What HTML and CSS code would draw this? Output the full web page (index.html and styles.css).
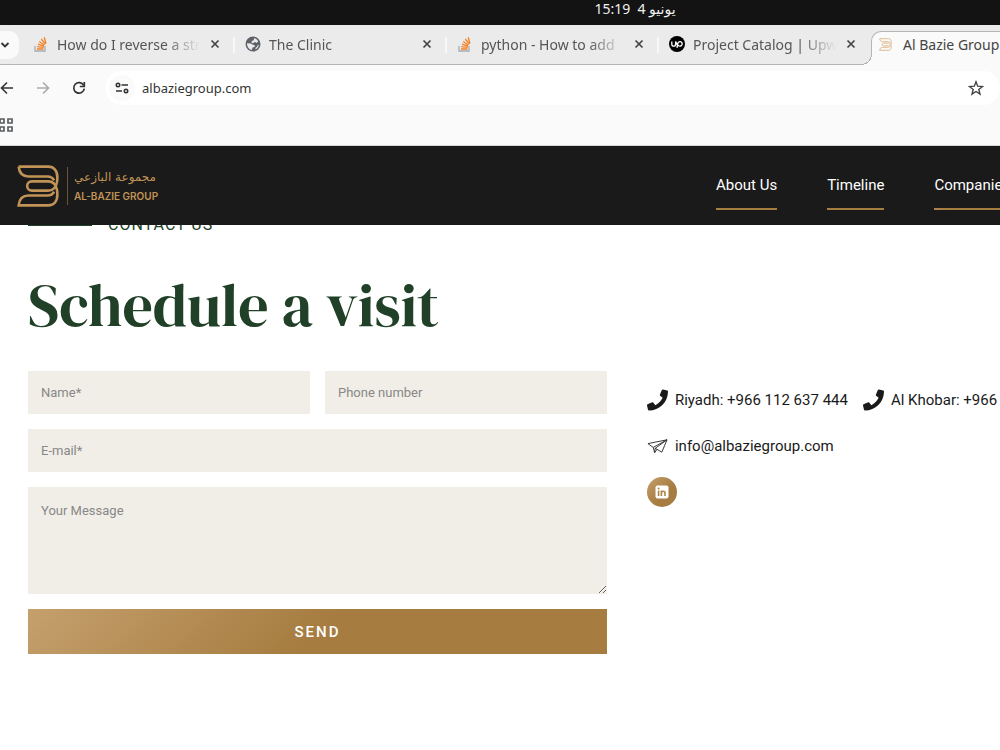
FILE: index.html
```
<!DOCTYPE html>
<html lang="en">
<head>
    <meta charset="UTF-8">
    <meta name="viewport" content="width=device-width, initial-scale=1.0">
    <title>Al Bazie Group</title>
    <link rel="stylesheet" href="styles.css">
</head>
<body>
    <svg class="defs" aria-hidden="true">
        <symbol id="close" viewBox="0 0 10 10">
            <path d="M1.500 1.500l7 7M8.500 1.500l-7 7" fill="none" stroke="#444" stroke-width="1.700"/>
        </symbol>
        <symbol id="stack" viewBox="0 0 16 16">
            <path d="M2 10v5h10v-5" fill="none" stroke="#a5adb5" stroke-width="1.300"/>
            <path d="M4 13h6.500M4.200 10.700l6.400.7M4.900 8.200l6 2M6.200 5.500l5.300 3.700M8.300 3l4 5.200M11.200 1.200l1.800 6.300" fill="none" stroke="#f48024" stroke-width="1.300"/>
        </symbol>
        <symbol id="phone" viewBox="0 0 512 512">
            <path fill="#1a1a1a" d="M493.400 24.600l-104-24c-11.300-2.600-22.900 3.300-27.500 13.900l-48 112c-4.200 9.800-1.400 21.300 6.900 28l60.600 49.600c-36 76.700-98.900 140.500-177.200 177.200l-49.600-60.600c-6.800-8.300-18.200-11.100-28-6.900l-112 48C3.900 366.500-2 378.100.6 389.400l24 104C27.100 504.200 36.700 512 48 512c256.100 0 464-207.500 464-464 0-11.200-7.700-20.900-18.600-23.400z"/>
        </symbol>
        <symbol id="brand" viewBox="15 10 128 132">
            <g fill="none" stroke="currentColor" stroke-width="8">
                <path d="M20 17H110C128 17 138 30 138 50C138 75 128 90 110 90H60a14 14 0 0 1 0-28H110C128 62 138 77 138 102C138 122 128 135 110 135H20C22 115 32 105 50 105H108c10 0 17-6 20-12"/>
                <path d="M20 17C22 37 32 47 50 47H108c10 0 17 6 20 12"/>
            </g>
        </symbol>
    </svg>

    <div class="system-bar" dir="rtl">
        <span>يونيو 4&nbsp; 15:19</span>
    </div>

    <div class="tab-strip">
        <button class="tab-search" aria-label="Search tabs">
            <svg width="10" height="10" viewBox="0 0 10 10"><path d="M1.500 3l3.500 3.500L8.500 3" fill="none" stroke="#333" stroke-width="1.800"/></svg>
        </button>
        <div class="tab">
            <svg class="favicon"><use href="#stack"/></svg>
            <span class="tab-title">How do I reverse a str</span>
            <button class="tab-close" aria-label="Close tab"><svg><use href="#close"/></svg></button>
        </div>
        <div class="tab">
            <svg class="favicon" viewBox="0 0 16 16">
                <circle cx="8" cy="8" r="7.500" fill="#5f6368"/>
                <path d="M9 2.200c1.800.3 3.300 1.400 4.200 3L11.500 7 9.800 5.800 8.300 7.200l-1.800-.6.3-1.600 2-.8zM2 7.200l4 .3 1.800 1.300 1.800.4.2 1.600-2.200.8-.8 2.300C4 13.300 2 10.600 2 7.200zM13.900 9c-.4 2-1.700 3.700-3.500 4.500l.2-1.800 1.600-.9.400-1.500z" fill="#ebebeb"/>
            </svg>
            <span class="tab-title">The Clinic</span>
            <button class="tab-close" aria-label="Close tab"><svg><use href="#close"/></svg></button>
        </div>
        <div class="tab">
            <svg class="favicon"><use href="#stack"/></svg>
            <span class="tab-title">python - How to add</span>
            <button class="tab-close" aria-label="Close tab"><svg><use href="#close"/></svg></button>
        </div>
        <div class="tab tab-last">
            <svg class="favicon" viewBox="0 0 16 16">
                <circle cx="8" cy="8" r="8" fill="#000"/>
                <path d="M2.800 5.500v2.800a1.900 1.900 0 0 0 3.800 0V5.500c.6 2 1.700 3.800 3.300 4.400 1.900.5 3.300-.6 3.300-2.100 0-1.400-1-2.200-2.200-2.200-1.500 0-2.200 1.200-2.500 3l-.5 3.200" fill="none" stroke="#fff" stroke-width="1.300"/>
            </svg>
            <span class="tab-title">Project Catalog | Upw</span>
            <button class="tab-close" aria-label="Close tab"><svg><use href="#close"/></svg></button>
        </div>
        <div class="tab tab-active">
            <svg class="favicon brand-icon"><use href="#brand"/></svg>
            <span>Al Bazie Group</span>
        </div>
    </div>

    <div class="toolbar">
        <div class="nav-buttons">
            <button aria-label="Back"><svg viewBox="0 0 14 14"><path d="M13 7H2M7 1.500L1.500 7 7 12.500" fill="none" stroke="#333" stroke-width="1.600"/></svg></button>
            <button aria-label="Forward"><svg viewBox="0 0 14 14"><path d="M1 7h11M7 1.500L12.500 7 7 12.500" fill="none" stroke="#aaa" stroke-width="1.600"/></svg></button>
            <button aria-label="Reload"><svg viewBox="0 0 14 14"><path d="M11.700 4.300A5.300 5.300 0 1 0 12.300 7.700" fill="none" stroke="#333" stroke-width="1.700"/><path d="M12.300 1v4.500H7.800" fill="none" stroke="#333" stroke-width="1.700"/></svg></button>
        </div>
        <div class="address">
            <button class="site-info" aria-label="Site information">
                <svg width="14" height="14" viewBox="0 0 14 14" fill="none" stroke="#333" stroke-width="1.600"><circle cx="3" cy="4" r="1.700"/><path d="M6.500 4H13M1 10h6"/><circle cx="11" cy="10" r="1.700"/></svg>
            </button>
            <input type="text" class="url" value="albaziegroup.com" aria-label="Address">
            <button class="star" aria-label="Bookmark this page">
                <svg width="16" height="16" viewBox="0 0 16 16"><path d="M8 1.800l1.700 4.400 4.800.3-3.700 3 1.200 4.600L8 11.500l-4 2.600 1.200-4.600-3.700-3 4.800-.3z" fill="none" stroke="#444" stroke-width="1.400"/></svg>
            </button>
        </div>
    </div>

    <div class="bookmarks">
        <button aria-label="Apps">
            <svg width="14" height="14" viewBox="0 0 14 14" fill="none" stroke="#5a5d61" stroke-width="1.700"><path d="M1 1h4v4H1zM9 1h4v4H9zM1 9h4v4H1zM9 9h4v4H9z"/></svg>
        </button>
    </div>

    <header class="site-header">
        <a href="#" class="logo">
            <svg class="logo-mark"><use href="#brand"/></svg>
            <span class="logo-text">
                <span class="logo-ar" lang="ar" dir="rtl">مجموعة البازعي</span>
                <span class="logo-en">AL-BAZIE GROUP</span>
            </span>
        </a>
        <nav class="menu">
            <a href="#">About Us</a>
            <a href="#">Timeline</a>
            <a href="#">Companies</a>
        </nav>
    </header>

    <main>
        <p class="eyebrow">CONTACT US</p>
        <h1>Schedule a visit</h1>
        <div class="contact">
            <form>
                <input type="text" placeholder="Name*" aria-label="Name">
                <input type="tel" placeholder="Phone number" aria-label="Phone number">
                <input type="email" class="wide" placeholder="E-mail*" aria-label="E-mail">
                <textarea class="wide" placeholder="Your Message" aria-label="Your Message"></textarea>
                <button type="button" class="wide send">SEND</button>
            </form>
            <div class="details">
                <div class="row">
                    <a href="tel:+966112637444"><svg><use href="#phone"/></svg>Riyadh: +966 112 637 444</a>
                    <a href="tel:+966"><svg><use href="#phone"/></svg>Al Khobar: +966</a>
                </div>
                <div class="row">
                    <a href="mailto:info@albaziegroup.com">
                        <svg viewBox="0 0 22 22" fill="none" stroke="#333" stroke-width="1" stroke-linejoin="round"><path d="M1 8.500L21 4.500 15.500 17.500 10.500 14.500 8 18 6.500 12.500zM6.500 12.500L21 4.500 8.500 13.500 8 18M8.500 13.500l2 1"/></svg>info@albaziegroup.com</a>
                </div>
                <a href="#" class="linkedin" aria-label="LinkedIn">
                    <svg width="14" height="14" viewBox="0 0 14 14"><rect x=".5" y=".5" width="13" height="13" rx="2" fill="#fff"/><path d="M3.600 5.500V11M6.400 11V5.500M6.400 11V8c0-2 3.600-2.500 3.600 0v3" fill="none" stroke="#ae8449" stroke-width="1.600"/><circle cx="3.600" cy="3.400" r="1" fill="#ae8449"/></svg>
                </a>
            </div>
        </div>
    </main>
</body>
</html>
```

FILE: styles.css
```
* {
    box-sizing: border-box;
}
body {
    margin: 0;
    font-family: Roboto, Arial, sans-serif;
    font-size: 15px;
    color: #1a1a1a;
    background-color: #fff;
    overflow-x: hidden;
}
a {
    color: inherit;
    text-decoration: none;
}
button {
    border: none;
    padding: 0;
    background: none;
    cursor: pointer;
}
svg {
    display: block;
    flex: none;
}
.defs {
    display: none;
}

/* browser window */
.system-bar {
    height: 25px;
    padding-left: 270px;
    background-color: #131313;
    color: #f0f0f0;
    font: 14px/18px "Noto Sans", "DejaVu Sans", sans-serif;
    text-align: center;
}
.tab-strip {
    display: flex;
    height: 40px;
    background-color: #ebebeb;
    box-shadow: inset 0 -1px #b5b5b5;
    font: 14px "Noto Sans", sans-serif;
    color: #555;
    overflow: hidden;
}
.tab-search {
    flex: none;
    width: 19px;
    height: 28px;
    margin-top: 6px;
    margin-right: 4px;
    background-color: #fafafa;
    border-radius: 0 10px 10px 0;
}
.tab {
    display: flex;
    flex: 0 0 212px;
    min-width: 0;
    align-items: center;
    padding: 0 15px 2px 10px;
    position: relative;
}
.tab::after {
    content: "";
    position: absolute;
    right: 0;
    top: 12px;
    width: 2px;
    height: 16px;
    background-color: #f8f8f8;
}
.tab-last::after,
.tab-active::after {
    display: none;
}
.favicon {
    width: 16px;
    height: 16px;
    margin-right: 8px;
}
.tab-title {
    flex: 1;
    min-width: 0;
    overflow: hidden;
    white-space: nowrap;
    mask-image: linear-gradient(to right, #000 75%, transparent);
}
.tab-close {
    flex: none;
    margin-left: 10px;
}
.tab-close svg {
    width: 10px;
    height: 10px;
}
.tab-active {
    flex: 1 0 auto;
    height: 34px;
    margin-top: 6px;
    padding: 0 0 8px 7px;
    background-color: #fafafa;
    border: 1px solid #b5b5b5;
    border-right: none;
    border-bottom: none;
    border-radius: 10px 0 0 0;
    color: #444;
    white-space: nowrap;
}
.tab-active::before {
    content: "";
    position: absolute;
    left: -11px;
    bottom: 0;
    width: 11px;
    height: 11px;
    background: radial-gradient(circle at 0 0, #ebebeb 10px, #b5b5b5 10px, #b5b5b5 11px, #fafafa 11px);
}
.brand-icon {
    width: 13px;
    height: 13px;
    margin-right: 11px;
    color: #d9ae78;
}
.toolbar {
    display: flex;
    align-items: center;
    height: 46px;
    background-color: #fafafa;
}
.nav-buttons {
    display: flex;
    gap: 22px;
    width: 105px;
}
.nav-buttons svg {
    width: 14px;
    height: 14px;
}
.address {
    display: flex;
    flex: 1;
    align-items: center;
    height: 34px;
    padding: 0 16px 0 4px;
    background-color: #fff;
    border-radius: 17px;
}
.site-info {
    display: flex;
    align-items: center;
    justify-content: center;
    width: 26px;
    height: 26px;
    border-radius: 50%;
    background-color: #fafafa;
}
.url {
    flex: 1;
    border: none;
    padding: 0 0 0 7px;
    font: 13px "Noto Sans", sans-serif;
    color: #333;
}
.bookmarks {
    height: 35px;
    padding-top: 7px;
    background-color: #fafafa;
    border-bottom: 1px solid #d5d5d5;
}
.bookmarks svg {
    margin-left: -1px;
}

/* site */
.site-header {
    display: grid;
    grid-template-columns: 1fr 284px;
    align-items: center;
    height: 79px;
    background-color: #1a1a1a;
    color: #fff;
    position: relative;
    z-index: 1;
}
.logo {
    display: flex;
    align-items: center;
    padding-left: 17px;
    color: #c19356;
}
.logo-mark {
    width: 42px;
    height: 44px;
    margin-right: 8px;
}
.logo-text {
    display: flex;
    flex-direction: column;
    align-items: flex-start;
    justify-content: space-between;
    height: 38px;
    padding-left: 6px;
    border-left: 1px solid #6b5334;
    white-space: nowrap;
}
.logo-ar {
    font: 12px/20px "DejaVu Sans", sans-serif;
}
.logo-en {
    font: 600 10px/18px Inter, sans-serif;
}
.menu {
    display: flex;
    gap: 50px;
    overflow: hidden;
    white-space: nowrap;
}
.menu a {
    flex: none;
    padding: 13px 0;
    line-height: 20px;
    border-bottom: 2px solid;
    border-image: linear-gradient(135deg, #c5a06d, #a67c40 50%) 1;
}
main {
    padding-left: 28px;
}
.eyebrow {
    display: flex;
    align-items: center;
    gap: 16px;
    margin: -10px 0 0;
    font-size: 16px;
    line-height: 20px;
    letter-spacing: 1px;
    color: #214028;
}
.eyebrow::before {
    content: "";
    width: 64px;
    height: 2px;
    background-color: #214028;
}
h1 {
    margin: 35px 0 31px;
    font: 60px/70px "DM Serif Display", "Liberation Serif", serif;
    color: #214028;
}
.contact {
    display: grid;
    grid-template-columns: minmax(0, 164fr) minmax(0, 100fr);
    gap: 40px;
}
form {
    display: grid;
    grid-template-columns: 1fr 1fr;
    gap: 15px;
}
form input,
form textarea {
    display: block;
    width: 100%;
    height: 43px;
    padding: 0 13px;
    border: none;
    border-radius: 0;
    background-color: #f1eee7;
    font: 13px Roboto, sans-serif;
}
form textarea {
    height: 107px;
    padding-top: 16px;
    resize: vertical;
}
form ::placeholder {
    color: #888;
}
.wide {
    grid-column: 1 / -1;
}
.send {
    height: 45px;
    background: linear-gradient(135deg, #c5a06d, #a67c40 50%);
    color: #fff;
    font: 500 15px Roboto, sans-serif;
    letter-spacing: 2px;
}
.details {
    padding-top: 18px;
    overflow: hidden;
    white-space: nowrap;
}
.row {
    display: flex;
    gap: 15px;
    margin-bottom: 24px;
}
.row a {
    display: flex;
    align-items: center;
    gap: 7px;
}
.row svg {
    width: 21px;
    height: 22px;
}
.linkedin {
    display: flex;
    align-items: center;
    justify-content: center;
    width: 30px;
    height: 30px;
    margin-top: -4px;
    border-radius: 50%;
    background: linear-gradient(135deg, #c5a06d, #a67c40 60%);
}
```
